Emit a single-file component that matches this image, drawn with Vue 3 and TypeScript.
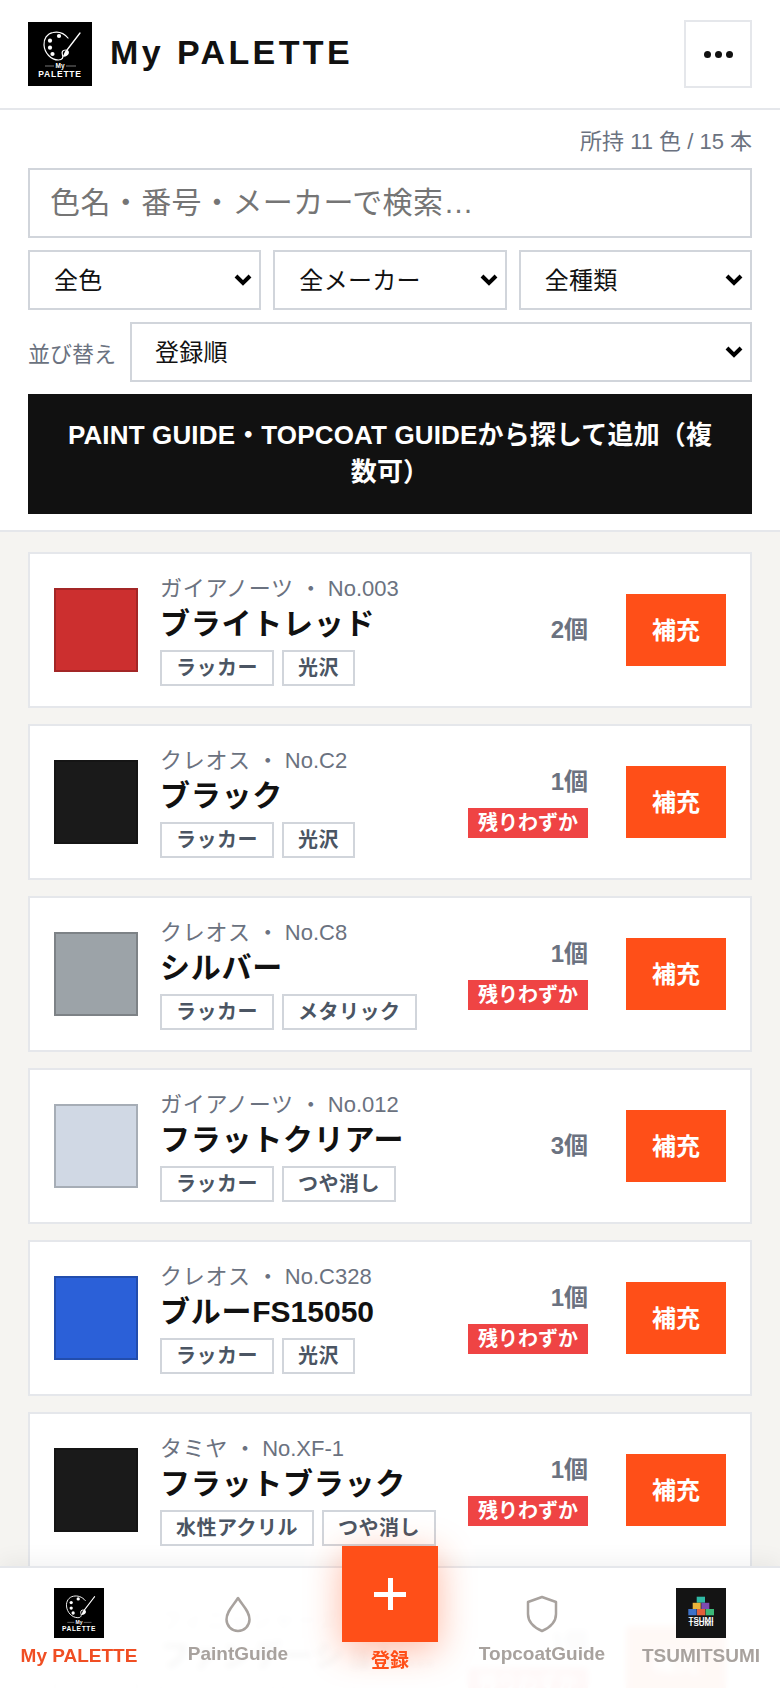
<script setup lang="ts">
interface Paint {
  brand: string
  code: string
  name: string
  tags: string[]
  count: number
  low: boolean
  color: string
  edge: string
}

const paints: Paint[] = [
  { brand: 'ガイアノーツ', code: 'No.003', name: 'ブライトレッド', tags: ['ラッカー', '光沢'], count: 2, low: false, color: '#cc2f2f', edge: '#a32626' },
  { brand: 'クレオス', code: 'No.C2', name: 'ブラック', tags: ['ラッカー', '光沢'], count: 1, low: true, color: '#1a1a1a', edge: '#151515' },
  { brand: 'クレオス', code: 'No.C8', name: 'シルバー', tags: ['ラッカー', 'メタリック'], count: 1, low: true, color: '#9ca3a8', edge: '#7d8286' },
  { brand: 'ガイアノーツ', code: 'No.012', name: 'フラットクリアー', tags: ['ラッカー', 'つや消し'], count: 3, low: false, color: '#d0d8e4', edge: '#a6adb6' },
  { brand: 'クレオス', code: 'No.C328', name: 'ブルーFS15050', tags: ['ラッカー', '光沢'], count: 1, low: true, color: '#2b60d8', edge: '#224dad' },
  { brand: 'タミヤ', code: 'No.XF-1', name: 'フラットブラック', tags: ['水性アクリル', 'つや消し'], count: 1, low: true, color: '#1a1a1a', edge: '#151515' },
  { brand: 'フィニッシャーズ', code: 'No.1', name: 'ファンデーションホワイト', tags: ['ラッカー', '光沢'], count: 1, low: true, color: '#f4f4f4', edge: '#c3c3c3' }
]

// Kana is tracked a little wider than Latin, so names are split into runs per script.
function runs(text: string): string[] {
  return text.split(/([\x20-\x7e]+)/).filter(Boolean)
}

function isLatin(run: string): boolean {
  return /^[\x20-\x7e]+$/.test(run)
}
</script>

<template>
  <div class="page">
    <header class="top">
      <div class="brand">
        <svg class="logo" viewBox="0 0 64 64">
          <rect width="64" height="64" fill="#000" />
          <g fill="none" stroke="#fff" stroke-linecap="round">
            <path d="M40 16C36 11 30 9.500 25 10.500 19 11.500 15.500 17 16 23c.5 8 7 15 14.500 15 4 0 5-2.500 4-5-1-3 0-5 3-5" stroke-width="1.200" />
            <path d="M52 11 39 28" stroke-width="1.300" />
          </g>
          <path d="M38.500 27.500c2 .8 2.800 2.200 2.300 4-.8 2.500-3.800 3.500-6.300 3 1.800-1.800 1.800-5 4-7z" fill="#fff" />
          <g fill="#fff">
            <circle cx="22" cy="18.700" r="2.100" /><circle cx="31" cy="14" r="2.100" /><circle cx="22" cy="25.700" r="2.100" /><circle cx="24.500" cy="32" r="2.100" />
          </g>
          <path d="M17 44h9M38 44h10" stroke="#aaa" stroke-width=".7" />
          <text x="32" y="46.200" class="logo-small">My</text>
          <text x="32" y="54.700" class="logo-big">PALETTE</text>
        </svg>
        <h1>My PALETTE</h1>
      </div>
      <button class="more" type="button" aria-label="メニュー">
        <i></i><i></i><i></i>
      </button>
    </header>

    <section class="controls">
      <p class="owned">所持 11 色 / 15 本</p>
      <input class="search" type="text" placeholder="色名・番号・メーカーで検索…" />
      <div class="filters">
        <select><option>全色</option></select>
        <select><option>全メーカー</option></select>
        <select><option>全種類</option></select>
      </div>
      <div class="sort">
        <label>並び替え</label>
        <select><option>登録順</option></select>
      </div>
      <button class="guide" type="button">PAINT GUIDE・TOPCOAT GUIDEから探して追加（複数可）</button>
    </section>

    <main class="list">
      <article v-for="p in paints" :key="p.code" class="card">
        <div class="swatch" :style="{ background: p.color, borderColor: p.edge }"></div>
        <div class="info">
          <p class="maker"><span class="maker-name">{{ p.brand }}</span><span class="dot">・</span>{{ p.code }}</p>
          <h2><span v-for="(r, i) in runs(p.name)" :key="i" :class="{ latin: isLatin(r) }">{{ r }}</span></h2>
          <div class="tags">
            <span v-for="t in p.tags" :key="t">{{ t }}</span>
          </div>
        </div>
        <div class="stock">
          <b>{{ p.count }}個</b>
          <em v-if="p.low">残りわずか</em>
        </div>
        <button class="refill" type="button">補充</button>
      </article>
    </main>

    <nav class="tabbar">
      <a class="tab active">
        <svg class="tab-img" viewBox="0 0 64 64">
          <rect width="64" height="64" fill="#000" />
          <g fill="none" stroke="#fff" stroke-linecap="round">
            <path d="M40 16C36 11 30 9.500 25 10.500 19 11.500 15.500 17 16 23c.5 8 7 15 14.500 15 4 0 5-2.500 4-5-1-3 0-5 3-5" stroke-width="1.200" />
            <path d="M52 11 39 28" stroke-width="1.300" />
          </g>
          <path d="M38.500 27.500c2 .8 2.800 2.200 2.300 4-.8 2.500-3.800 3.500-6.300 3 1.800-1.800 1.800-5 4-7z" fill="#fff" />
          <g fill="#fff">
            <circle cx="22" cy="18.700" r="2.100" /><circle cx="31" cy="14" r="2.100" /><circle cx="22" cy="25.700" r="2.100" /><circle cx="24.500" cy="32" r="2.100" />
          </g>
          <path d="M17 44h9M38 44h10" stroke="#aaa" stroke-width=".7" />
          <text x="32" y="46.200" class="logo-small">My</text>
          <text x="32" y="54.700" class="logo-big">PALETTE</text>
        </svg>
        <span>My PALETTE</span>
      </a>
      <a class="tab raised">
        <svg class="tab-ico" viewBox="0 0 40 40" fill="none" stroke="#a8a29e" stroke-width="2.500">
          <path d="M20 4C15 12 8.500 17 8.500 25.500a11.500 11.500 0 0 0 23 0C31.500 17 25 12 20 4z" stroke-linejoin="round" />
        </svg>
        <span>PaintGuide</span>
      </a>
      <a class="tab add">
        <span class="plus"><i></i></span>
        <span class="add-label">登録</span>
      </a>
      <a class="tab raised">
        <svg class="tab-ico" viewBox="0 0 40 40" fill="none" stroke="#a8a29e" stroke-width="2.500">
          <path d="M20 3 34 8v12c0 8-6 13.500-14 17C12 33.500 6 28 6 20V8z" stroke-linejoin="round" />
        </svg>
        <span>TopcoatGuide</span>
      </a>
      <a class="tab">
        <svg class="tab-img" viewBox="0 0 50 50">
          <rect width="50" height="50" fill="#141414" />
          <rect x="20.700" y="8.700" width="8.300" height="6" fill="#2fb9a4" />
          <rect x="16.700" y="14.800" width="8" height="6.200" fill="#eab43a" />
          <rect x="25.300" y="14.800" width="8" height="6.200" fill="#7d4bb0" />
          <rect x="12.300" y="21" width="8.300" height="6.300" fill="#3e72c8" />
          <rect x="21" y="21" width="8.300" height="6.300" fill="#e2603a" />
          <rect x="29.700" y="21" width="8.300" height="6.300" fill="#3cb878" />
          <text x="25" y="33.500" class="tsumi">TSUMI</text>
          <text x="25" y="38.300" class="tsumi">TSUMI</text>
        </svg>
        <span>TSUMITSUMI</span>
      </a>
    </nav>
  </div>
</template>

<style>
html,
body {
  margin: 0;
  background: #f5f4f1;
}
</style>

<style scoped>
.page {
  font-family: "Liberation Sans", "Noto Sans CJK JP", sans-serif;
  color: #111;
  height: 1688px;
  overflow: hidden;
  background: #f5f4f1;
}

.top {
  height: 108px;
  display: flex;
  align-items: center;
  justify-content: space-between;
  padding: 0 28px;
  background: #fff;
  border-bottom: 2px solid #e5e7eb;
}

.brand {
  display: flex;
  align-items: center;
  gap: 18px;
}

.logo {
  width: 64px;
  height: 64px;
  display: block;
}

.logo-small,
.logo-big {
  fill: #fff;
  font-weight: 700;
  text-anchor: middle;
  font-family: "Liberation Sans", sans-serif;
}

.logo-small {
  font-size: 6.500px;
}

.logo-big {
  font-size: 8.500px;
  letter-spacing: 0.8px;
}

.tsumi {
  fill: #fff;
  font-weight: 700;
  font-size: 8px;
  text-anchor: middle;
  font-family: "Liberation Sans", sans-serif;
}

h1 {
  margin: 0 0 4px;
  font-size: 34px;
  font-weight: 700;
  letter-spacing: 3.400px;
  color: #111;
}

.more {
  width: 68px;
  height: 68px;
  background: #fff;
  border: 2px solid #e5e7eb;
  display: flex;
  align-items: center;
  justify-content: center;
  gap: 4px;
  padding: 0;
}

.more i {
  width: 7px;
  height: 7px;
  border-radius: 50%;
  background: #111;
}

.controls {
  background: #fff;
  padding: 18px 28px 16px;
  border-bottom: 2px solid #e5e7eb;
  display: flex;
  flex-direction: column;
}

.owned {
  margin: 0 0 12px;
  text-align: right;
  font-size: 22px;
  line-height: 28px;
  color: #6b7280;
}

select,
.search {
  box-sizing: border-box;
  font-family: inherit;
  background-color: #fff;
  border: 2px solid #d1d5db;
  border-radius: 0;
  color: #111;
}

.search {
  width: 100%;
  height: 70px;
  padding: 0 20px;
  font-size: 30px;
  letter-spacing: 0.4px;
  margin-bottom: 12px;
  outline: none;
}

.search::placeholder {
  color: #757575;
}

select {
  height: 60px;
  font-size: 24px;
  letter-spacing: 0.3px;
  padding: 0 24px;
  appearance: none;
  background-image: url("data:image/svg+xml,%3Csvg xmlns='http://www.w3.org/2000/svg' viewBox='0 0 18 12'%3E%3Cpath d='M2 2l7 7 7-7' fill='none' stroke='%23000' stroke-width='4'/%3E%3C/svg%3E");
  background-repeat: no-repeat;
  background-size: 18px 12px;
  background-position: right 7px center;
}

.filters {
  display: grid;
  grid-template-columns: repeat(3, 1fr);
  gap: 12px;
  margin-bottom: 12px;
}

.filters select {
  width: 100%;
}

.sort {
  display: flex;
  align-items: center;
  gap: 14px;
  margin-bottom: 12px;
}

.sort label {
  font-size: 22px;
  color: #6b7280;
  white-space: nowrap;
}

.sort select {
  flex: 1;
  padding-left: 23px;
}

.guide {
  height: 120px;
  border: 0;
  background: #111;
  color: #fff;
  font-family: inherit;
  font-size: 26px;
  letter-spacing: 0.15px;
  line-height: 37px;
  font-weight: 700;
  padding: 0 32px;
}

.list {
  padding: 20px 28px;
  display: flex;
  flex-direction: column;
  gap: 16px;
}

.card {
  box-sizing: border-box;
  height: 156px;
  flex: none;
  background: #fff;
  border: 2px solid #e5e7eb;
  padding: 0 24px;
  display: flex;
  align-items: center;
}

.swatch {
  box-sizing: border-box;
  width: 84px;
  height: 84px;
  border: 2px solid;
  flex: none;
}

.info {
  flex: 1;
  min-width: 0;
  margin: 0 16px 0 22px;
}

.maker {
  margin: 0;
  font-size: 22px;
  line-height: 30px;
  color: #6b7280;
  white-space: nowrap;
}

.maker-name {
  letter-spacing: 0.7px;
}

.dot {
  margin: 0 6px;
}

h2 {
  margin: 0 0 6px;
  font-size: 30px;
  line-height: 40px;
  letter-spacing: 0.75px;
  font-weight: 700;
  color: #111;
  white-space: nowrap;
  overflow: hidden;
  text-overflow: ellipsis;
}

.latin {
  letter-spacing: 0;
}

.tags {
  display: flex;
  gap: 8px;
}

.tags span {
  box-sizing: border-box;
  height: 36px;
  line-height: 32px;
  padding: 0 14px;
  border: 2px solid #d1d5db;
  font-size: 20px;
  letter-spacing: 0.5px;
  font-weight: 700;
  color: #4b5563;
  white-space: nowrap;
}

.stock {
  display: flex;
  flex-direction: column;
  align-items: flex-end;
  gap: 10px;
  margin-right: 38px;
  flex: none;
}

.stock b {
  font-size: 24px;
  line-height: 32px;
  color: #6b7280;
}

.stock em {
  font-style: normal;
  font-weight: 700;
  font-size: 20px;
  line-height: 30px;
  padding: 0 10px;
  color: #fff;
  background: #ef4444;
}

.refill {
  width: 100px;
  height: 72px;
  flex: none;
  border: 0;
  background: #ff4f18;
  color: #fff;
  font-family: inherit;
  font-size: 24px;
  font-weight: 700;
  padding: 0 0 4px;
}

.tabbar {
  position: fixed;
  left: 0;
  right: 0;
  bottom: 0;
  height: 122px;
  box-sizing: border-box;
  display: grid;
  grid-template-columns: 158px 160px 1fr 160px 158px;
  background: rgba(255, 255, 255, 0.965);
  border-top: 2px solid #e5e7eb;
  box-shadow: 0 -6px 20px rgba(0, 0, 0, 0.05);
  backdrop-filter: blur(3px);
}

.tab {
  position: relative;
  display: flex;
  flex-direction: column;
  align-items: center;
  font-size: 19px;
  font-weight: 700;
  color: #a8a29e;
  white-space: nowrap;
}

.tab-img {
  width: 50px;
  height: 50px;
  margin-top: 20px;
  margin-bottom: 7px;
  display: block;
}

.tab-ico {
  width: 40px;
  height: 40px;
  margin-top: 26px;
  margin-bottom: 9px;
}

.active {
  color: #f04e23;
}

.add {
  color: #ff4f18;
}

.plus {
  position: absolute;
  top: -22px;
  left: 50%;
  margin-left: -48px;
  width: 96px;
  height: 96px;
  background: #ff4f18;
  box-shadow: 0 8px 36px rgba(255, 79, 24, 0.4);
  display: flex;
  align-items: center;
  justify-content: center;
}

.plus i {
  position: relative;
  width: 32px;
  height: 5px;
  background: #fff;
}

.plus i::after {
  content: "";
  position: absolute;
  left: 13.500px;
  top: -13.500px;
  width: 5px;
  height: 32px;
  background: #fff;
}

.add-label {
  position: absolute;
  top: 77px;
  font-size: 19px;
}
</style>
